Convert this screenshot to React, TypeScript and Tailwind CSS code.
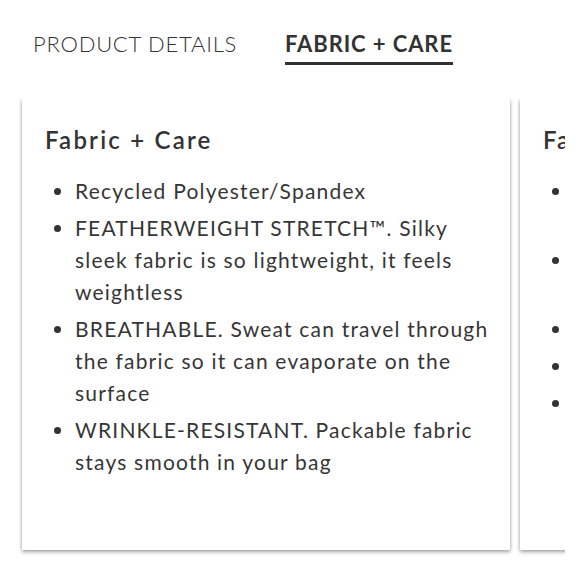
import React from "react";

const items1: string[][] = [
  ["Recycled Polyester/Spandex"],
  ["FEATHERWEIGHT STRETCH™. Silky", "sleek fabric is so lightweight, it feels", "weightless"],
  ["BREATHABLE. Sweat can travel through", "the fabric so it can evaporate on the", "surface"],
  ["WRINKLE-RESISTANT. Packable fabric", "stays smooth in your bag"],
];

const items2: string[][] = [
  ["Recycled Nylon/Spandex fabric that", "is soft to the touch"],
  ["FOUR-WAY STRETCH. Moves with", "you in every direction"],
  ["QUICK-DRY"],
  ["ANTI-ODOR"],
  ["UPF 50+"],
];

function Card({ items }: { items: string[][] }) {
  return (
    <div className="shrink-0 w-[488px] h-[451px] bg-white shadow-[0_2px_4px_rgba(0,0,0,0.35),0_0_3px_rgba(0,0,0,0.12)] pt-[25px] pl-[23px] pr-[8px]">
      <h2 className="text-[24px] leading-[32px] font-semibold text-[#333] tracking-[2.2px]">
        Fabric + Care
      </h2>
      <ul className="mt-[19px] list-disc pl-[30px] text-[21px] leading-[32px] text-[#363636] font-normal tracking-[1.2px] marker:text-[#333]">
        {items.map((lines, i) => (
          <li key={i} className="mb-[5px] whitespace-nowrap">
            {lines.map((l, j) => (
              <React.Fragment key={j}>
                {j > 0 && <br />}
                {l}
              </React.Fragment>
            ))}
          </li>
        ))}
      </ul>
    </div>
  );
}

export default function App() {
  return (
    <div
      className="w-[580px] h-[579px] bg-white"
      style={{ fontFamily: "Lato, 'Open Sans', sans-serif" }}
    >
      <div className="flex items-center gap-[48px] pl-[33px] pt-[30px]">
        <div className="h-[35px] text-[22px] leading-[28px] font-light text-[#333] tracking-[0.75px]">
          PRODUCT DETAILS
        </div>
        <div className="h-[35px] text-[22px] leading-[28px] font-bold text-[#333] border-b-[3px] border-[#333] tracking-[0.9px]">
          FABRIC + CARE
        </div>
      </div>
      <div className="w-[565px] overflow-hidden mt-[34px] pb-[10px]">
        <div className="flex gap-[10px] pl-[22px]">
          <Card items={items1} />
          <Card items={items2} />
        </div>
      </div>
    </div>
  );
}
